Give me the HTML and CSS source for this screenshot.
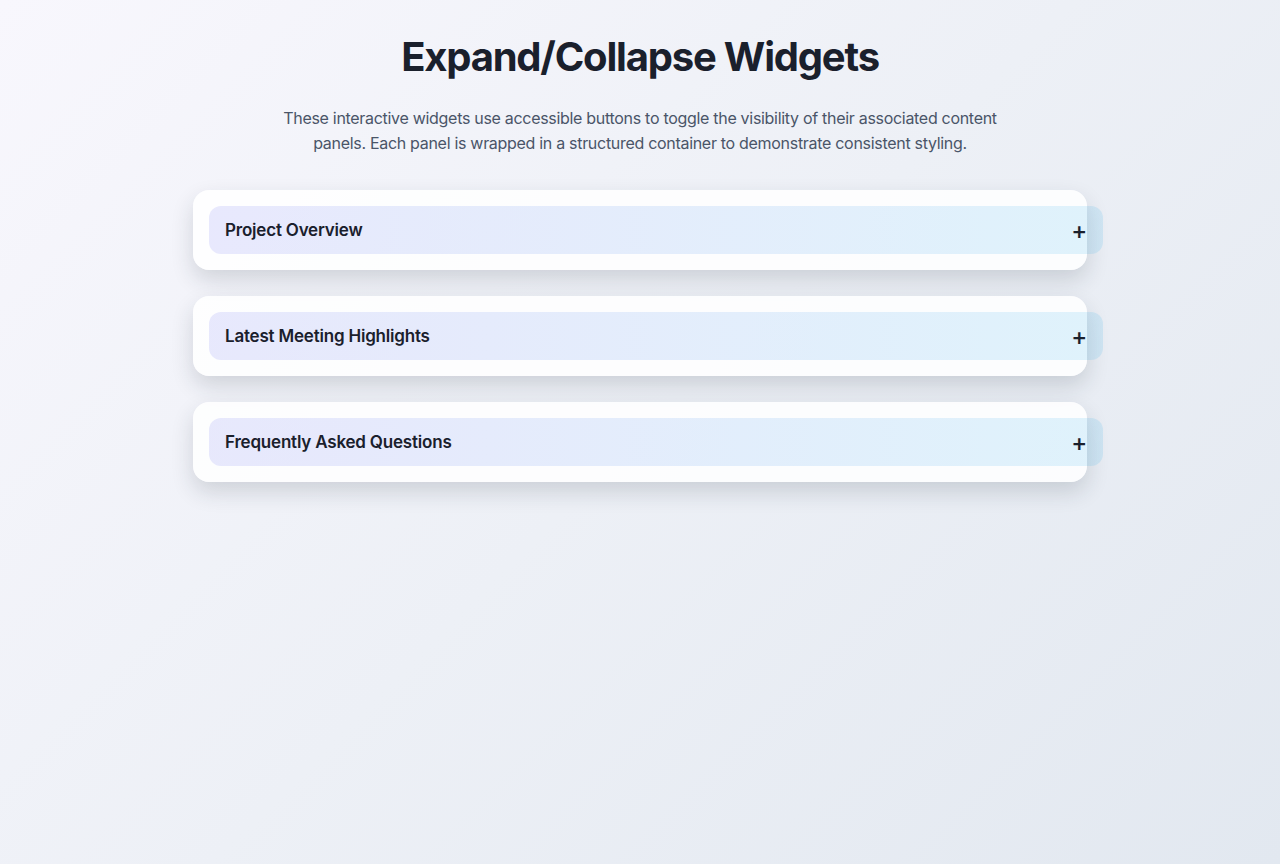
FILE: index.html
```html
<!DOCTYPE html>
<html lang="en">
<head>
    <meta charset="UTF-8">
    <meta name="viewport" content="width=device-width, initial-scale=1.0">
    <title>Expand/Collapse Widgets</title>
    <link rel="stylesheet" href="styles.css">
</head>
<body>
    <main class="page">
        <h1>Expand/Collapse Widgets</h1>
        <p class="intro">These interactive widgets use accessible buttons to toggle the visibility of their associated content panels. Each panel is wrapped in a structured container to demonstrate consistent styling.</p>

        <div class="widgets">
            <section class="widget">
                <button class="toggle" aria-expanded="false" aria-controls="panel-1">
                    <span>Project Overview</span>
                    <span class="icon">+</span>
                </button>
                <div class="panel" id="panel-1" hidden>
                    <p>A summary of goals, timelines and deliverables for the current project.</p>
                </div>
            </section>

            <section class="widget">
                <button class="toggle" aria-expanded="false" aria-controls="panel-2">
                    <span>Latest Meeting Highlights</span>
                    <span class="icon">+</span>
                </button>
                <div class="panel" id="panel-2" hidden>
                    <p>Key decisions and action items from the most recent team meeting.</p>
                </div>
            </section>

            <section class="widget">
                <button class="toggle" aria-expanded="false" aria-controls="panel-3">
                    <span>Frequently Asked Questions</span>
                    <span class="icon">+</span>
                </button>
                <div class="panel" id="panel-3" hidden>
                    <p>Answers to common questions about the process and tools.</p>
                </div>
            </section>
        </div>
    </main>

    <script>
        document.querySelectorAll('.toggle').forEach((btn) => {
            btn.addEventListener('click', () => {
                const panel = document.getElementById(btn.getAttribute('aria-controls'));
                const open = btn.getAttribute('aria-expanded') === 'true';
                btn.setAttribute('aria-expanded', String(!open));
                btn.querySelector('.icon').textContent = open ? '+' : '−';
                panel.hidden = open;
            });
        });
    </script>
</body>
</html>
```

FILE: styles.css
```css
html {
    min-height: 100%;
    background: linear-gradient(135deg, #f8f7fd 0%, #edf0f6 50%, #e2e8f0 100%);
}
body {
    margin: 0;
    font-family: Inter, "Noto Sans", Arial, sans-serif;
    color: #1a202c;
}
.page {
    max-width: 894px;
    margin: 0 auto;
    padding: 32px 0;
}
h1 {
    font-size: 40px;
    font-weight: 700;
    letter-spacing: -1.2px;
    text-align: center;
    margin: 0 0 24px;
    line-height: 50px;
}
.intro {
    max-width: 720px;
    margin: 0 auto 34px;
    text-align: center;
    font-size: 16px;
    line-height: 25px;
    letter-spacing: -0.3px;
    color: #4a5568;
}
.widgets {
    display: flex;
    flex-direction: column;
    gap: 26px;
}
.widget {
    background: rgba(255, 255, 255, 0.85);
    border-radius: 16px;
    padding: 16px;
    box-shadow: 0 10px 22px rgba(30, 41, 59, 0.16);
}
.toggle {
    display: flex;
    justify-content: space-between;
    align-items: center;
    box-sizing: content-box;
    width: 100%;
    height: 24px;
    padding: 12px 16px;
    border: none;
    border-radius: 12px;
    background: linear-gradient(90deg, rgba(99, 102, 241, 0.14), rgba(14, 165, 233, 0.12));
    font-family: inherit;
    font-size: 17px;
    font-weight: 600;
    letter-spacing: -0.2px;
    line-height: 24px;
    color: #1a202c;
    text-align: left;
    cursor: pointer;
}
.toggle .icon {
    font-size: 24px;
    font-weight: 500;
    line-height: 24px;
    position: relative;
    top: 1px;
}
.panel {
    padding: 16px 16px 0;
    color: #4a5568;
    line-height: 1.6;
}
.panel p {
    margin: 0;
}
```
